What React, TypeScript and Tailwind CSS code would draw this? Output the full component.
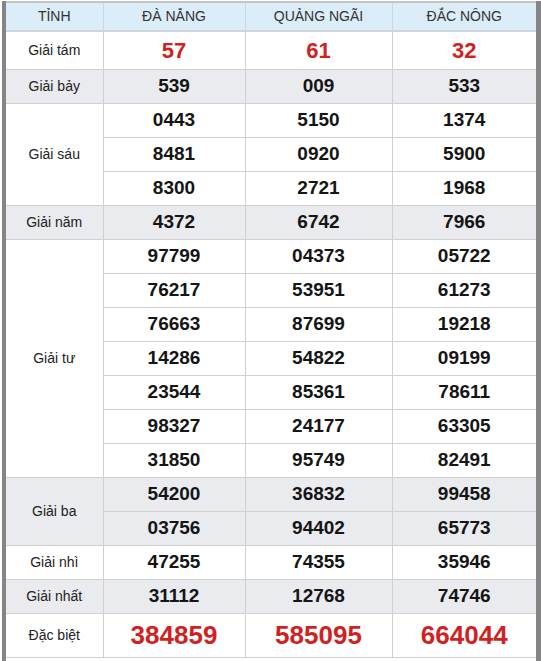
import React from "react";

type Row = { label: string; nums: string[][]; gray?: boolean; kind?: "tam" | "db" };

const rows: Row[] = [
  { label: "Giải tám", nums: [["57", "61", "32"]], kind: "tam" },
  { label: "Giải bảy", nums: [["539", "009", "533"]], gray: true },
  {
    label: "Giải sáu",
    nums: [
      ["0443", "5150", "1374"],
      ["8481", "0920", "5900"],
      ["8300", "2721", "1968"],
    ],
  },
  { label: "Giải năm", nums: [["4372", "6742", "7966"]], gray: true },
  {
    label: "Giải tư",
    nums: [
      ["97799", "04373", "05722"],
      ["76217", "53951", "61273"],
      ["76663", "87699", "19218"],
      ["14286", "54822", "09199"],
      ["23544", "85361", "78611"],
      ["98327", "24177", "63305"],
      ["31850", "95749", "82491"],
    ],
  },
  {
    label: "Giải ba",
    nums: [
      ["54200", "36832", "99458"],
      ["03756", "94402", "65773"],
    ],
    gray: true,
  },
  { label: "Giải nhì", nums: [["47255", "74355", "35946"]] },
  { label: "Giải nhất", nums: [["31112", "12768", "74746"]], gray: true },
  { label: "Đặc biệt", nums: [["384859", "585095", "664044"]], kind: "db" },
];

export default function App() {
  return (
    <div className="h-[661px] w-[541px] overflow-hidden bg-white pl-[2px] font-['Liberation_Sans',Arial,sans-serif]">
      <div className="h-full border-l-[4px] border-r-[5px] border-[#858585]">
        <div className="mt-px border-t-2 border-[#c4c4c4]">
          <table className="w-[530px] table-fixed border-collapse text-center">
            <colgroup>
              <col className="w-[97px]" />
              <col className="w-[142px]" />
              <col className="w-[147px]" />
              <col className="w-[144px]" />
            </colgroup>
            <thead>
              <tr className="h-[28px] bg-[#daedf8] text-[14px] text-[#333]">
                <th className="border-b-2 border-r border-[#cfd6db] font-normal">TỈNH</th>
                <th className="border-b-2 border-r border-[#cfd6db] font-normal">ĐÀ NẴNG</th>
                <th className="border-b-2 border-r border-[#cfd6db] font-normal">QUẢNG NGÃI</th>
                <th className="border-b-2 border-[#cfd6db] font-normal">ĐẮC NÔNG</th>
              </tr>
            </thead>
            <tbody>
              {rows.map((r) =>
                r.nums.map((line, i) => (
                  <tr
                    key={r.label + i}
                    className={
                      (r.gray ? "bg-[#e9ebee] " : "bg-white ") +
                      (r.kind === "tam" ? "h-[38px]" : r.kind === "db" ? "h-[44px]" : "h-[34px]")
                    }
                  >
                    {i === 0 && (
                      <td
                        rowSpan={r.nums.length}
                        className="border border-l-0 border-[#d0d0d0] text-[14px] text-[#222]"
                      >
                        {r.label}
                      </td>
                    )}
                    {line.map((n, j) => (
                      <td
                        key={j}
                        className={
                          "border border-[#d0d0d0] font-bold " +
                          (j === 2 ? "border-r-0 " : "") +
                          (r.kind === "tam"
                            ? "text-[22px] text-[#d21f1f]"
                            : r.kind === "db"
                            ? "text-[26px] text-[#d21f1f]"
                            : "text-[19px] text-[#151515]")
                        }
                      >
                        {n}
                      </td>
                    ))}
                  </tr>
                ))
              )}
            </tbody>
          </table>
        </div>
      </div>
    </div>
  );
}
